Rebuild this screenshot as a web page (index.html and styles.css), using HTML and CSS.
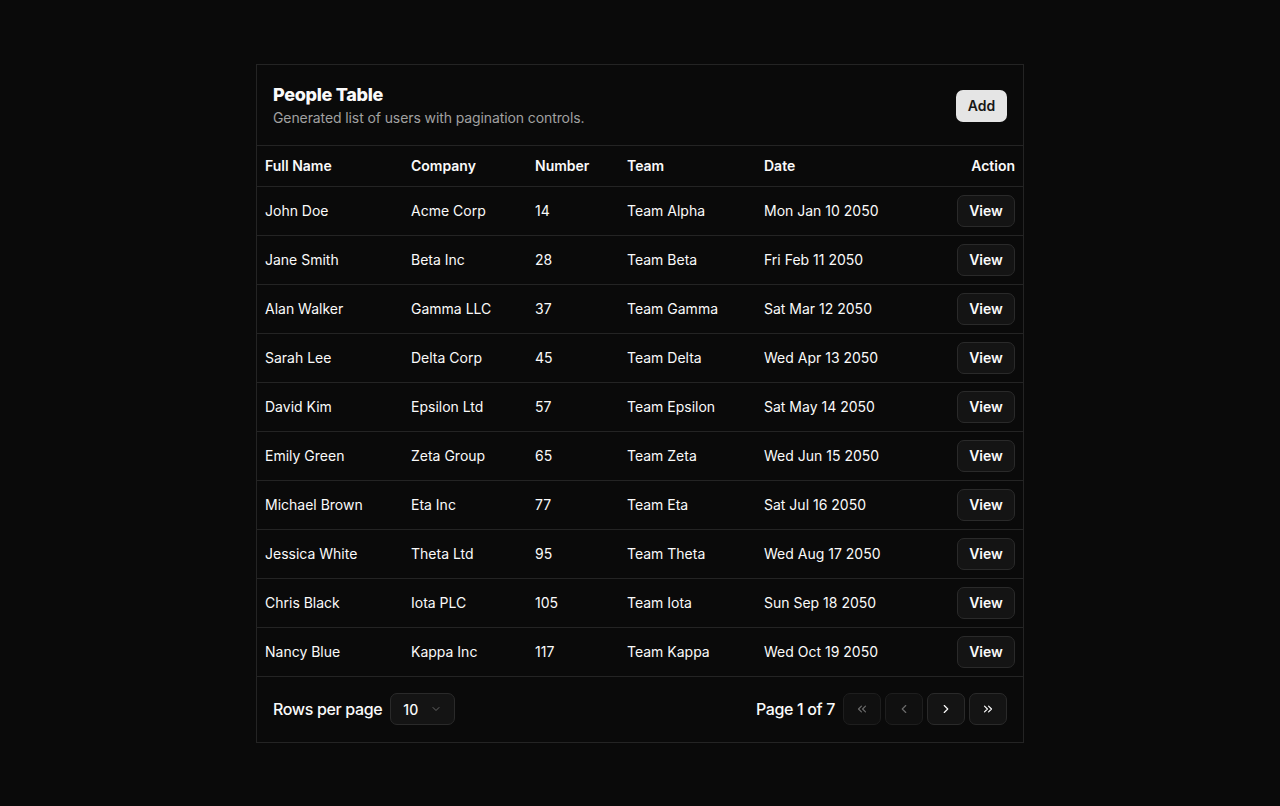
FILE: index.html
```html
<!DOCTYPE html>
<html>
<head>
<meta charset="utf-8">
<link rel="stylesheet" href="styles.css">
</head>
<body>
<div class="card">
  <div class="card-header">
    <div>
      <div class="title">People Table</div>
      <div class="subtitle">Generated list of users with pagination controls.</div>
    </div>
    <button class="btn-add">Add</button>
  </div>
  <table class="table">
    <colgroup>
      <col class="c1"><col class="c2"><col class="c3"><col class="c4"><col class="c5"><col class="c6">
    </colgroup>
    <thead>
      <tr><th>Full Name</th><th>Company</th><th>Number</th><th>Team</th><th>Date</th><th class="right">Action</th></tr>
    </thead>
    <tbody>
      <tr><td>John Doe</td><td>Acme Corp</td><td>14</td><td>Team Alpha</td><td>Mon Jan 10 2050</td><td class="right"><button class="btn-view">View</button></td></tr>
      <tr><td>Jane Smith</td><td>Beta Inc</td><td>28</td><td>Team Beta</td><td>Fri Feb 11 2050</td><td class="right"><button class="btn-view">View</button></td></tr>
      <tr><td>Alan Walker</td><td>Gamma LLC</td><td>37</td><td>Team Gamma</td><td>Sat Mar 12 2050</td><td class="right"><button class="btn-view">View</button></td></tr>
      <tr><td>Sarah Lee</td><td>Delta Corp</td><td>45</td><td>Team Delta</td><td>Wed Apr 13 2050</td><td class="right"><button class="btn-view">View</button></td></tr>
      <tr><td>David Kim</td><td>Epsilon Ltd</td><td>57</td><td>Team Epsilon</td><td>Sat May 14 2050</td><td class="right"><button class="btn-view">View</button></td></tr>
      <tr><td>Emily Green</td><td>Zeta Group</td><td>65</td><td>Team Zeta</td><td>Wed Jun 15 2050</td><td class="right"><button class="btn-view">View</button></td></tr>
      <tr><td>Michael Brown</td><td>Eta Inc</td><td>77</td><td>Team Eta</td><td>Sat Jul 16 2050</td><td class="right"><button class="btn-view">View</button></td></tr>
      <tr><td>Jessica White</td><td>Theta Ltd</td><td>95</td><td>Team Theta</td><td>Wed Aug 17 2050</td><td class="right"><button class="btn-view">View</button></td></tr>
      <tr><td>Chris Black</td><td>Iota PLC</td><td>105</td><td>Team Iota</td><td>Sun Sep 18 2050</td><td class="right"><button class="btn-view">View</button></td></tr>
      <tr><td>Nancy Blue</td><td>Kappa Inc</td><td>117</td><td>Team Kappa</td><td>Wed Oct 19 2050</td><td class="right"><button class="btn-view">View</button></td></tr>
    </tbody>
  </table>
  <div class="card-footer">
    <div class="rows">
      <span>Rows per page</span>
      <div class="select">
        <span>10</span>
        <svg width="12" height="12" viewBox="0 0 24 24" fill="none" stroke="#666" stroke-width="2" stroke-linecap="round" stroke-linejoin="round"><path d="m6 9 6 6 6-6"/></svg>
      </div>
    </div>
    <div class="pager">
      <span class="page-label">Page 1 of 7</span>
      <button class="pbtn disabled"><svg width="14" height="14" viewBox="0 0 24 24" fill="none" stroke="currentColor" stroke-width="2" stroke-linecap="round" stroke-linejoin="round"><path d="m11 17-5-5 5-5"/><path d="m18 17-5-5 5-5"/></svg></button>
      <button class="pbtn disabled"><svg width="14" height="14" viewBox="0 0 24 24" fill="none" stroke="currentColor" stroke-width="2" stroke-linecap="round" stroke-linejoin="round"><path d="m15 18-6-6 6-6"/></svg></button>
      <button class="pbtn"><svg width="14" height="14" viewBox="0 0 24 24" fill="none" stroke="currentColor" stroke-width="2" stroke-linecap="round" stroke-linejoin="round"><path d="m9 18 6-6-6-6"/></svg></button>
      <button class="pbtn"><svg width="14" height="14" viewBox="0 0 24 24" fill="none" stroke="currentColor" stroke-width="2" stroke-linecap="round" stroke-linejoin="round"><path d="m6 17 5-5-5-5"/><path d="m13 17 5-5-5-5"/></svg></button>
    </div>
  </div>
</div>
</body>
</html>
```
FILE: styles.css
```css
* { box-sizing: border-box; }
html, body {
  margin: 0;
  background: #0a0a0a;
  color: #fafafa;
  font-family: Inter, "Noto Sans", sans-serif;
}
body {
  padding-top: 64px;
}
.card {
  width: 768px;
  margin: 0 auto;
  border: 1px solid #242424;
  background: #0a0a0a;
}
.card-header {
  display: flex;
  justify-content: space-between;
  align-items: center;
  padding: 18px 16px 17px 16px;
  border-bottom: 1px solid #242424;
}
.title {
  font-size: 18px;
  font-weight: 800;
  line-height: 24px;
  letter-spacing: -0.3px;
}
.subtitle {
  font-size: 14px;
  color: #a1a1a1;
  line-height: 20px;
  margin-top: 1px;
  letter-spacing: -0.1px;
}
.btn-add {
  font-family: inherit;
  background: #e5e5e5;
  color: #171717;
  border: none;
  border-radius: 7px;
  height: 32px;
  width: 51px;
  font-size: 14px;
  font-weight: 600;
}
.table {
  width: 100%;
  border-collapse: collapse;
  font-size: 14px;
}
.c1 { width: 146px; }
.c2 { width: 124px; }
.c3 { width: 92px; }
.c4 { width: 137px; }
.c5 { width: 160px; }
th {
  text-align: left;
  font-weight: 600;
  height: 40px;
  padding: 0 8px;
  border-bottom: 1px solid #242424;
}
td {
  height: 49px;
  padding: 0 8px;
  border-bottom: 1px solid #242424;
}
.right { text-align: right; }
.btn-view {
  font-family: inherit;
  background: #141414;
  color: #fafafa;
  border: 1px solid #2a2a2a;
  border-radius: 7px;
  height: 32px;
  width: 58px;
  font-size: 14px;
  font-weight: 600;
  vertical-align: middle;
}
.card-footer {
  display: flex;
  justify-content: space-between;
  align-items: center;
  height: 65px;
  padding: 0 16px;
}
.rows {
  display: flex;
  align-items: center;
  gap: 8px;
  font-size: 16px;
  font-weight: 500;
  letter-spacing: -0.35px;
}
.select {
  display: flex;
  align-items: center;
  gap: 12px;
  height: 32px;
  width: 65px;
  padding: 0 12px;
  border: 1px solid #2a2a2a;
  border-radius: 7px;
  background: #141414;
  font-size: 14px;
  letter-spacing: 0;
}
.pager {
  display: flex;
  align-items: center;
  gap: 4px;
}
.page-label {
  font-size: 16px;
  font-weight: 500;
  margin-right: 4px;
  letter-spacing: -0.35px;
}
.pbtn {
  width: 38px;
  height: 32px;
  display: flex;
  align-items: center;
  justify-content: center;
  background: #141414;
  border: 1px solid #2a2a2a;
  border-radius: 7px;
  color: #fafafa;
  padding: 0;
}
.pbtn.disabled {
  color: #6b6b6b;
  background: #101010;
  border-color: #1e1e1e;
}
```
